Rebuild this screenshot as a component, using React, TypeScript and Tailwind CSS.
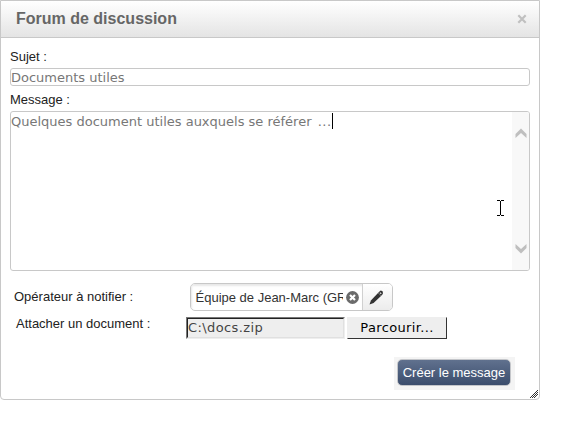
import React from "react";

const ARIAL = "font-['Liberation_Sans',Arial,sans-serif]";
const VERDANA = "font-['DejaVu_Sans',Verdana,sans-serif]";

function Header() {
  return (
    <header className="flex h-[37px] items-center justify-between border-b border-[#c8c8c8] bg-gradient-to-b from-white to-[#e4e4e4] pl-[15px] pr-3">
      <h1 className="whitespace-nowrap text-[16px] leading-5 font-bold text-[#666]">Forum de discussion</h1>
      <button aria-label="Fermer" className="flex">
        <svg width="10" height="10" viewBox="0 0 10 10" stroke="#c0c0c0" strokeWidth="2.2">
          <path d="M1.3 1.3 8.7 8.7M8.7 1.3 1.3 8.7" />
        </svg>
      </button>
    </header>
  );
}

function ScrollBar() {
  return (
    <div className="flex w-[17px] flex-col items-center justify-between bg-[#f8f8f8] pt-4 pb-4">
      <svg width="12" height="10" viewBox="0 0 12 10" fill="#bfbfbf">
        <path d="M6 .5 11.5 6V10L6 5 .5 10V6Z" />
      </svg>
      <svg width="12" height="10" viewBox="0 0 12 10" fill="#bfbfbf">
        <path d="M6 9.5 11.5 4V0L6 5 .5 0V4Z" />
      </svg>
    </div>
  );
}

function OperatorField() {
  return (
    <div className="flex h-7 w-[203px] overflow-hidden rounded-[5px] border border-[#c8c8c8]">
      <div className="flex w-[171px] items-center pl-1 shadow-[inset_1px_2px_2px_#e8e8e8]">
        <span className="w-[148px] overflow-hidden whitespace-nowrap pt-px pl-[0.5px] text-[13px] leading-5 text-[#333]">
          Équipe de Jean-Marc (GR
        </span>
        <svg className="ml-[3px] shrink-0" width="13" height="13" viewBox="0 0 13 13">
          <circle cx="6.5" cy="6.5" r="6.4" fill="#6b6b6b" />
          <path d="m4 4 5 5M9 4 4 9" stroke="#fff" strokeWidth="2.2" />
        </svg>
      </div>
      <div className="flex flex-1 items-center border-l border-[#d0d0d0] bg-gradient-to-b from-white to-[#ececec] pl-[6px]">
        <svg width="15" height="15" viewBox="0 0 15 15">
          <path d="M.5 14.5 1.9 10.4 9 3 12 6 4.6 13Z" fill="#333" />
          <path d="M9 3 11 .9Q12 .1 13.2 1.3 14.4 2.5 13.8 3.9L12 6Z" fill="#333" />
          <path d="m10.9 2.6 1.3 1.3" stroke="#ddd" strokeWidth="1.3" />
        </svg>
      </div>
    </div>
  );
}

function ResizeGrip() {
  return (
    <svg className="absolute right-px bottom-px" width="8" height="8" viewBox="0 0 8 8" fill="#333" shapeRendering="crispEdges">
      <path d="M7 0h1v1H7zM6 1h1v1H6zM5 2h1v1H5zM7 2h1v1H7zM4 3h1v1H4zM6 3h1v1H6zM3 4h1v1H3zM5 4h1v1H5zM7 4h1v1H7zM2 5h1v1H2zM4 5h1v1H4zM6 5h1v1H6zM1 6h1v1H1zM3 6h1v1H3zM5 6h1v1H5zM0 7h1v1H0zM2 7h1v1H2zM4 7h1v1H4z" />
    </svg>
  );
}

export default function App() {
  return (
    <div className={`h-[441px] w-[575px] bg-white text-[#222] ${ARIAL}`}>
      <section className="relative flex h-[400px] w-[540px] flex-col overflow-hidden rounded-b-[4px] border border-[#c8c8c8] bg-white">
        <Header />
        <div className="flex flex-col px-[9px]">
          <label className="mt-[9px] h-[21px] text-[13px] leading-5">Sujet :</label>
          <div className={`flex h-[18px] rounded-[3px] border border-[#c8c8c8] text-[13px] leading-[17px] text-[#777] ${VERDANA}`}>
            <span className="whitespace-nowrap">Documents utiles</span>
          </div>
          <label className="mt-[4px] h-[21px] text-[13px] leading-5">Message :</label>
          <div className="flex h-[160px] overflow-hidden rounded-[3px] border border-[#c8c8c8]">
            <div className={`flex flex-1 items-start pt-px text-[13px] leading-[17px] text-[#777] ${VERDANA}`}>
              <span className="whitespace-nowrap">
                Quelques document utiles auxquels se référer <span className="ml-[2px] tracking-[0.5px]">...</span>
              </span>
              <span className="h-4 w-px bg-black" />
            </div>
            <ScrollBar />
          </div>
        </div>
        <div className="mt-3 flex h-7 items-center pl-[13px]">
          <span className="w-[176px] whitespace-nowrap text-[13px]">Opérateur à notifier :</span>
          <OperatorField />
        </div>
        <div className="mt-[6px] flex h-[22px] items-start pl-[15px]">
          <span className="-mt-[3px] w-[170px] whitespace-nowrap text-[13px] leading-5">Attacher un document :</span>
          <div className="flex h-[22px] w-[159px] border border-t-[#777] border-r-[#eee] border-b-[#eee] border-l-[#777]">
            <div className={`flex flex-1 items-center border border-t-[#222] border-r-[#e0e0e0] border-b-[#e0e0e0] border-l-[#222] bg-[#eee] text-[13px] text-[#444] ${VERDANA}`}>
              <span className="tracking-[0.4px]">C:\docs.zip</span>
            </div>
          </div>
          <button className={`ml-[2px] flex h-[22px] w-[100px] items-center justify-center border border-t-[#eee] border-r-[#333] border-b-[#333] border-l-[#eee] bg-[#eee] text-[13px] tracking-[0.35px] text-black ${VERDANA}`}>
            Parcourir...
          </button>
        </div>
        <div className="mt-[18px] flex justify-end pr-[24px]">
          <div className="flex h-[33px] w-[121px] bg-[#f4f4f4] pt-[2px] pl-[3px]">
            <button className="h-[27px] w-[114px] rounded-[5px] border border-[#c4c6ca] bg-gradient-to-b from-[#60718e] to-[#3c4e6d] text-[13px] whitespace-nowrap text-white">
              Créer le message
            </button>
          </div>
        </div>
        <ResizeGrip />
        <svg className="absolute top-[199px] left-[496px]" width="7" height="16" viewBox="0 0 7 16" fill="none" stroke="#000" shapeRendering="crispEdges">
          <path d="M0 .5H3M4 .5H7M3.5 1V15M0 15.5H3M4 15.5H7" />
        </svg>
      </section>
    </div>
  );
}
